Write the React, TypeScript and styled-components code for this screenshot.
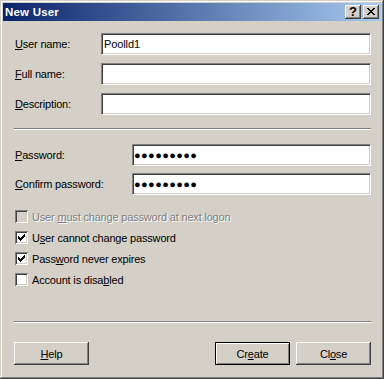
import React from 'react';
import styled, { createGlobalStyle } from 'styled-components';

const Global = createGlobalStyle`
  html, body { margin: 0; padding: 0; background: #d4d0c8; }
  body {
    font-family: "Liberation Sans", Arial, sans-serif;
    font-size: 11px;
    color: #000;
  }
  * { box-sizing: border-box; }
`;

const Window = styled.div`
  width: 384px;
  height: 379px;
  padding: 3px;
  background: #d4d0c8;
  box-shadow: inset -1px -1px #404040, inset 1px 1px #d4d0c8,
    inset -2px -2px #808080, inset 2px 2px #fff;
  display: flex;
  flex-direction: column;
`;

const TitleBar = styled.div`
  height: 18px;
  background: linear-gradient(to right, #0a246a, #a6caf0);
  display: flex;
  align-items: center;
  padding: 0 2px 0 2px;
`;

const TitleText = styled.div`
  flex: 1;
  color: #fff;
  font-weight: bold;
  font-size: 11.5px;
  letter-spacing: 0.2px;
`;

const CaptionButtons = styled.div`
  display: flex;
  gap: 2px;
`;

const CaptionButton = styled.div`
  width: 16px;
  height: 14px;
  background: #d4d0c8;
  box-shadow: inset -1px -1px #404040, inset 1px 1px #fff,
    inset -2px -2px #808080, inset 2px 2px #d4d0c8;
  display: flex;
  align-items: center;
  justify-content: center;
  font-weight: bold;
  font-size: 13px;
  line-height: 14px;
  padding-bottom: 1px;
  svg { display: block; shape-rendering: crispEdges; }
`;

const Body = styled.div`
  flex: 1;
  display: flex;
  flex-direction: column;
  padding: 12px 10px 0 12px;
`;

const FieldGrid = styled.div<{ $labelWidth: number; $gap: number; $top: number }>`
  display: grid;
  grid-template-columns: ${(p) => p.$labelWidth}px 1fr;
  row-gap: ${(p) => p.$gap}px;
  margin-top: ${(p) => p.$top}px;
  align-items: center;
`;

const Label = styled.label`
  letter-spacing: -0.18px;
  white-space: nowrap;
`;

const TextField = styled.input<{ $dots?: boolean }>`
  height: 22px;
  width: 100%;
  margin: 0;
  background: #fff;
  border: 1px solid;
  border-color: #808080 #fff #fff #808080;
  box-shadow: inset 1px 1px #404040, inset -1px -1px #d4d0c8;
  padding: 0 0 0 ${(p) => (p.$dots ? 1 : 2)}px;
  font-family: "Liberation Sans", Arial, sans-serif;
  font-size: 11px;
  letter-spacing: ${(p) => (p.$dots ? '0.4px' : '-0.1px')};
  color: #000;
  outline: none;
`;

const Separator = styled.div<{ $top: number }>`
  height: 2px;
  margin: ${(p) => p.$top}px 0 0 -1px;
  border-top: 1px solid #808080;
  border-bottom: 1px solid #fff;
`;

const CheckList = styled.div`
  display: flex;
  flex-direction: column;
  margin-top: 11px;
`;

const CheckRow = styled.div<{ $disabled?: boolean }>`
  height: 21px;
  display: flex;
  align-items: center;
  gap: 4px;
  letter-spacing: -0.18px;
  white-space: nowrap;
  color: ${(p) => (p.$disabled ? '#808080' : '#000')};
  text-shadow: ${(p) => (p.$disabled ? '1px 1px 0 #fff' : 'none')};
`;

const Box = styled.div<{ $disabled?: boolean }>`
  width: 13px;
  height: 13px;
  flex: none;
  background: ${(p) => (p.$disabled ? '#d4d0c8' : '#fff')};
  box-shadow: inset 1px 1px #808080, inset -1px -1px #fff,
    inset 2px 2px #404040, inset -2px -2px #d4d0c8;
  padding: 3px;
  svg { display: block; shape-rendering: crispEdges; }
`;

const ButtonRow = styled.div`
  display: flex;
  gap: 6px;
  margin: 19px 0 0 -1px;
`;

const Spacer = styled.div`
  flex: 1;
`;

const Button = styled.div<{ $default?: boolean }>`
  width: 75px;
  height: 23px;
  background: #d4d0c8;
  display: flex;
  align-items: center;
  justify-content: center;
  letter-spacing: -0.18px;
  ${(p) =>
    p.$default
      ? `border: 1px solid #000;
         box-shadow: inset 1px 1px #fff, inset -1px -1px #808080;`
      : `box-shadow: inset -1px -1px #404040, inset 1px 1px #fff,
           inset -2px -2px #808080, inset 2px 2px #d4d0c8;`}
`;

const Check = () => {
  const cols: [number, number][] = [
    [0, 2], [1, 3], [2, 4], [3, 3], [4, 2], [5, 1], [6, 0],
  ];
  return (
    <svg width="7" height="7" viewBox="0 0 7 7">
      {cols.map(([x, y]) => (
        <rect key={x} x={x} y={y} width="1" height="3" fill="#000" />
      ))}
    </svg>
  );
};

const CloseGlyph = () => {
  const rows: [number, number, number][] = [
    [0, 0, 2], [6, 0, 2],
    [1, 1, 2], [5, 1, 2],
    [2, 2, 4],
    [3, 3, 2],
    [2, 4, 4],
    [1, 5, 2], [5, 5, 2],
    [0, 6, 2], [6, 6, 2],
  ];
  return (
    <svg width="8" height="7" viewBox="0 0 8 7">
      {rows.map(([x, y, w], i) => (
        <rect key={i} x={x} y={y} width={w} height="1" fill="#000" />
      ))}
    </svg>
  );
};

type CheckItem = { pre: string; key: string; post: string; checked: boolean; disabled?: boolean };

const checks: CheckItem[] = [
  { pre: 'User ', key: 'm', post: 'ust change password at next logon', checked: false, disabled: true },
  { pre: 'U', key: 's', post: 'er cannot change password', checked: true },
  { pre: 'Pass', key: 'w', post: 'ord never expires', checked: true },
  { pre: 'Account is disa', key: 'b', post: 'led', checked: false },
];

export default function App() {
  return (
    <>
      <Global />
      <Window>
        <TitleBar>
          <TitleText>New User</TitleText>
          <CaptionButtons>
            <CaptionButton>?</CaptionButton>
            <CaptionButton>
              <CloseGlyph />
            </CaptionButton>
          </CaptionButtons>
        </TitleBar>
        <Body>
          <FieldGrid $labelWidth={86} $gap={8} $top={0}>
            <Label><u>U</u>ser name:</Label>
            <TextField readOnly value="Poolld1" />
            <Label><u>F</u>ull name:</Label>
            <TextField readOnly value="" />
            <Label><u>D</u>escription:</Label>
            <TextField readOnly value="" />
          </FieldGrid>
          <Separator $top={13} />
          <FieldGrid $labelWidth={117} $gap={7} $top={14}>
            <Label><u>P</u>assword:</Label>
            <TextField $dots readOnly value="●●●●●●●●●" />
            <Label><u>C</u>onfirm password:</Label>
            <TextField $dots readOnly value="●●●●●●●●●" />
          </FieldGrid>
          <CheckList>
            {checks.map((c) => (
              <CheckRow key={c.post} $disabled={c.disabled}>
                <Box $disabled={c.disabled}>{c.checked && <Check />}</Box>
                <span>
                  {c.pre}
                  <u>{c.key}</u>
                  {c.post}
                </span>
              </CheckRow>
            ))}
          </CheckList>
          <Separator $top={31} />
          <ButtonRow>
            <Button><span><u>H</u>elp</span></Button>
            <Spacer />
            <Button $default><span>Cr<u>e</u>ate</span></Button>
            <Button><span>Cl<u>o</u>se</span></Button>
          </ButtonRow>
        </Body>
      </Window>
    </>
  );
}
